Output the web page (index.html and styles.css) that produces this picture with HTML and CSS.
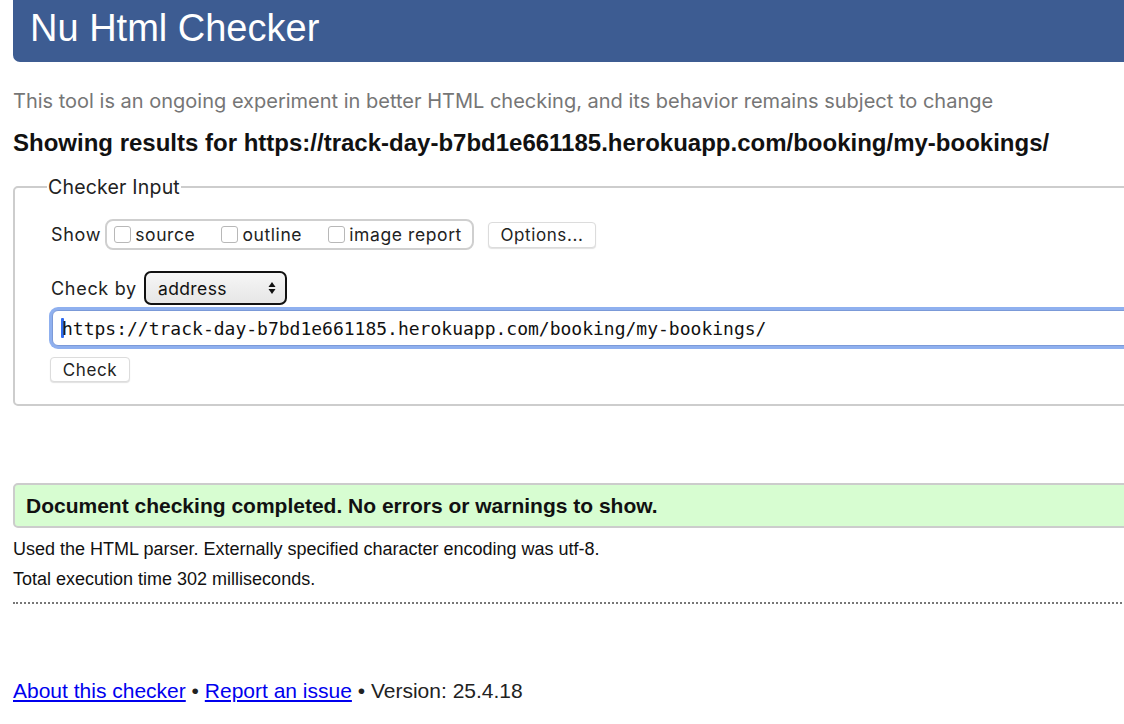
FILE: index.html
```html
<!DOCTYPE html>
<html lang="en">
<head>
<meta charset="utf-8">
<title>Nu Html Checker</title>
<link rel="stylesheet" href="styles.css">
</head>
<body>
<div class="page">
  <h1 class="banner">Nu Html Checker</h1>
  <p class="intro">This tool is an ongoing experiment in better HTML checking, and its behavior remains subject to change</p>
  <h2 class="showing">Showing results for https://track-day-b7bd1e661185.herokuapp.com/booking/my-bookings/</h2>
  <form class="checker">
    <fieldset class="input-set">
      <legend class="legend">Checker Input</legend>
      <div class="row show-row">
        <span class="label">Show</span>
        <div class="show-group">
          <label class="opt"><span class="box"></span>source</label>
          <label class="opt"><span class="box"></span>outline</label>
          <label class="opt"><span class="box"></span>image report</label>
        </div>
        <span class="btn options-btn">Options...</span>
      </div>
      <div class="row by-row">
        <span class="label">Check by</span>
        <div class="select">
          <span>address</span>
          <svg class="arrows" width="8" height="14" viewBox="0 0 8 14"><path d="M4 1 L7.5 6 H0.5 Z" fill="#111"/><path d="M4 13 L7.5 8 H0.5 Z" fill="#111"/></svg>
        </div>
      </div>
      <div class="url-wrap">
        <div class="url"><span class="caret"></span>https://track-day-b7bd1e661185.herokuapp.com/booking/my-bookings/</div>
      </div>
      <div class="row check-row">
        <span class="btn check-btn">Check</span>
      </div>
    </fieldset>
  </form>
  <p class="success">Document checking completed. No errors or warnings to show.</p>
  <div class="details">
    <p class="detail">Used the HTML parser. Externally specified character encoding was utf-8.</p>
    <p class="detail">Total execution time 302 milliseconds.</p>
  </div>
  <hr class="dots">
  <p class="footer"><a href="#">About this checker</a> • <a href="#">Report an issue</a> • Version: 25.4.18</p>
</div>
</body>
</html>
```

FILE: styles.css
```css
html, body {
  margin: 0;
  padding: 0;
  overflow: hidden;
  background: #fff;
}
body {
  font-family: "Liberation Sans", Arial, sans-serif;
  color: #111;
}
.page {
  width: 1160px;
  margin-left: 13px;
}
.banner {
  margin: 0;
  height: 62px;
  box-sizing: border-box;
  padding: 5px 0 0 17px;
  background: #3d5c92;
  color: #fff;
  font-weight: normal;
  font-size: 38px;
  line-height: 46px;
  border-bottom-left-radius: 7px;
}
.intro {
  margin: 27px 0 0;
  font-family: "Inter", "Liberation Sans", sans-serif;
  font-size: 20px;
  line-height: 24px;
  color: #767676;
}
.showing {
  margin: 16px 0 0;
  font-size: 24px;
  line-height: 28px;
  font-weight: bold;
  color: #111;
}
.checker { margin: 0; }
.input-set {
  margin: 18px 0 0;
  padding: 10px 36px 22px 36px;
  border: 2px solid #cdcdcd;
  border-radius: 5px;
  min-width: 0;
  font-family: "Inter", "Liberation Sans", sans-serif;
}
.legend {
  font-size: 19.5px;
  letter-spacing: 0.2px;
  padding: 0 1px;
  margin-left: -4px;
  color: #222;
}
.row {
  display: flex;
  align-items: center;
}
.label {
  font-size: 18px;
  letter-spacing: 0.7px;
  color: #222;
}
.show-row { margin-top: 10px; }
.show-group {
  display: flex;
  align-items: center;
  gap: 26px;
  margin-left: 4px;
  height: 31px;
  box-sizing: border-box;
  padding: 0 10px 0 7px;
  border: 2px solid #cfcfcf;
  border-radius: 8px;
}
.opt {
  display: flex;
  align-items: center;
  font-size: 17.5px;
  letter-spacing: 0.6px;
  color: #222;
}
.box {
  width: 17px;
  height: 17px;
  box-sizing: border-box;
  border: 1px solid #b8b8b8;
  border-radius: 3px;
  margin-right: 4px;
  background: #fff;
}
.btn {
  display: inline-flex;
  align-items: center;
  justify-content: center;
  box-sizing: border-box;
  height: 26px;
  border: 1px solid #dcdcdc;
  border-radius: 4px;
  background: #fff;
  font-size: 17px;
  letter-spacing: 0.6px;
  color: #222;
  box-shadow: 0 1px 1px rgba(0,0,0,0.12);
}
.options-btn {
  margin-left: 14px;
  width: 108px;
}
.by-row { margin-top: 21px; }
.select {
  display: flex;
  align-items: center;
  justify-content: space-between;
  margin-left: 7px;
  width: 143px;
  height: 34px;
  box-sizing: border-box;
  padding: 0 9px 0 12px;
  border: 2px solid #111;
  border-radius: 7px;
  background: linear-gradient(#f6f6f6, #e6e6e6);
  font-size: 17.5px;
  letter-spacing: 0.4px;
  color: #111;
}
.url-wrap {
  margin: 2px -40px 0 -2px;
  padding: 3px;
  border-radius: 9px;
  background: #8fb0ef;
}
.url {
  height: 36px;
  box-sizing: border-box;
  padding: 0 0 0 8px;
  display: flex;
  align-items: center;
  background: #fff;
  border: 1px solid #7b9ad8;
  border-radius: 6px;
  font-family: "DejaVu Sans Mono", monospace;
  font-size: 18px;
  color: #111;
  white-space: nowrap;
}
.caret {
  display: inline-block;
  width: 3px;
  height: 20px;
  background: #2f6bf0;
  border-radius: 1px;
  margin-right: -2px;
}
.check-row { margin-top: 8px; }
.check-btn {
  width: 80px;
  margin-left: -1px;
  height: 25px;
}
.success {
  margin: 77px 0 0;
  height: 45px;
  box-sizing: border-box;
  padding: 0 11px;
  display: flex;
  align-items: center;
  background: #d7fdd1;
  border: 2px solid #cccccc;
  border-radius: 5px;
  font-size: 21px;
  font-weight: bold;
  color: #111;
}
.details { margin-top: 6px; }
.detail {
  margin: 0;
  font-size: 18px;
  line-height: 30px;
  color: #111;
}
.dots {
  margin: 8px 0 0;
  border: 0;
  border-top: 2px dotted #777;
  height: 0;
}
.footer {
  margin: 75px 0 0;
  font-size: 21px;
  color: #222;
}
.footer a { color: #0000ee; text-decoration: underline; }
```
